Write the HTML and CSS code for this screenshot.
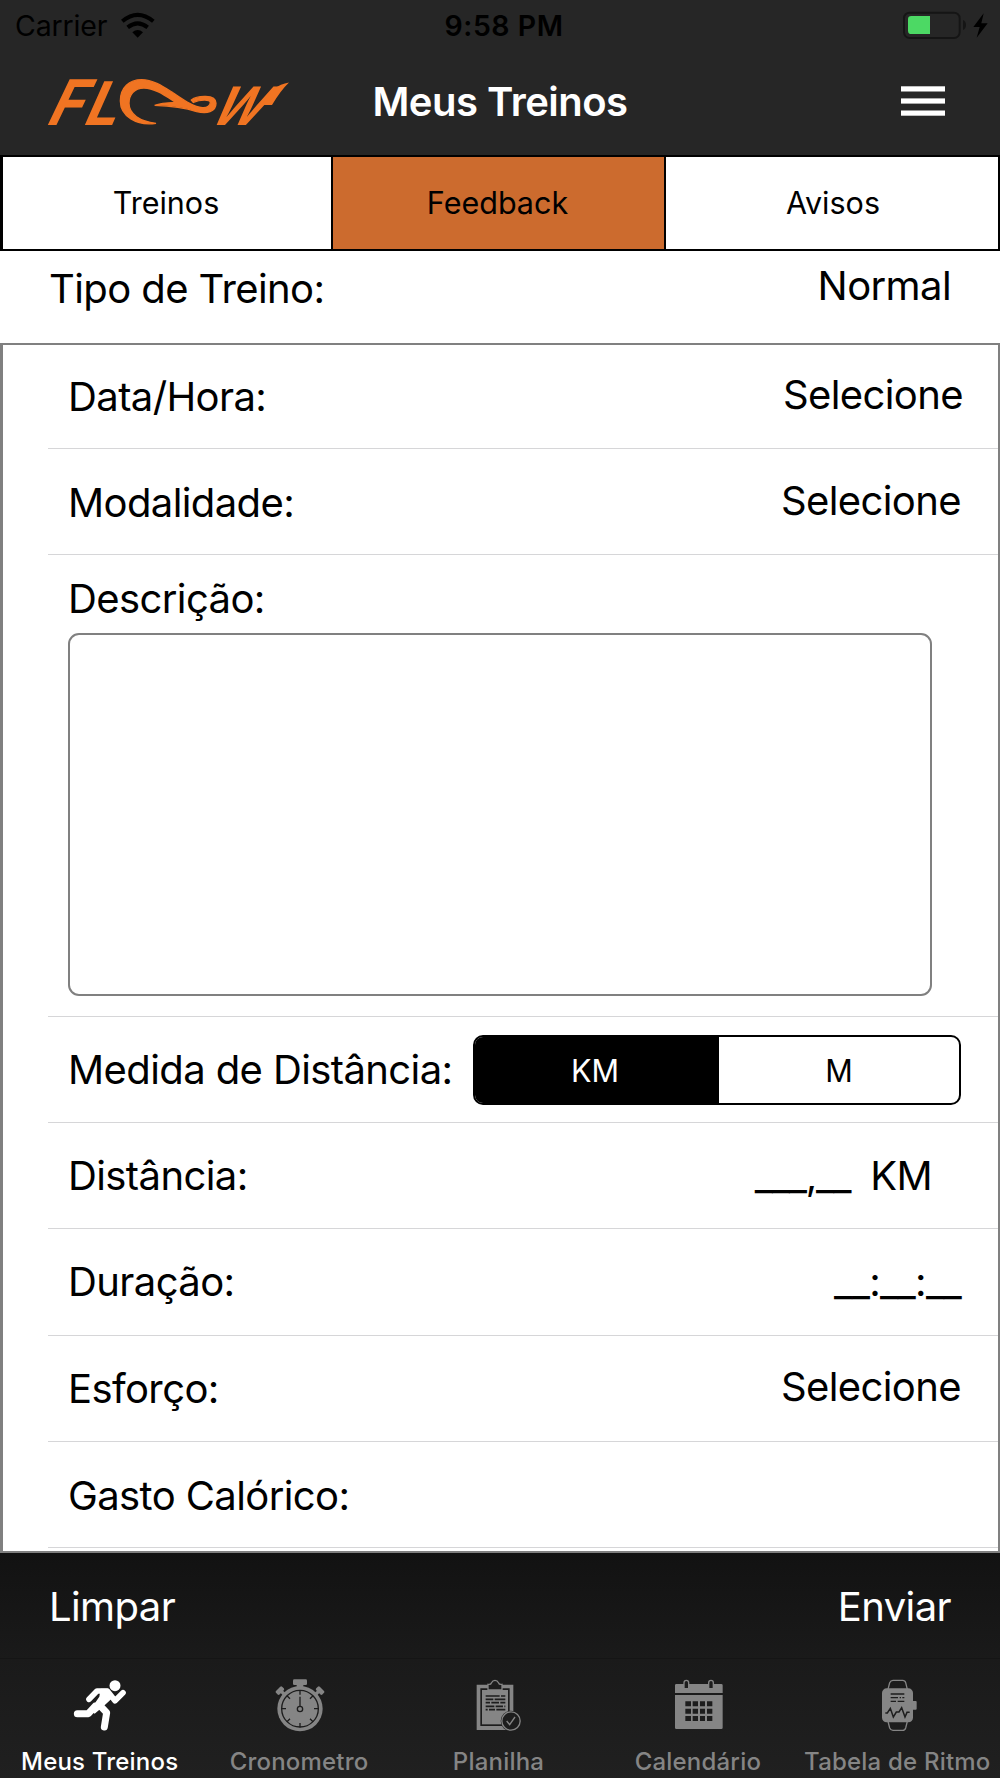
FILE: index.html
```html
<!DOCTYPE html>
<html lang="pt-BR">
<head>
<meta charset="utf-8">
<title>Meus Treinos</title>
<link rel="stylesheet" href="styles.css">
</head>
<body>
<div class="screen">
  <header class="header">
    <div class="status">
      <div class="status-side">
        <span class="carrier">Carrier</span>
        <svg class="wifi" width="36" height="26" viewBox="360 33 108 78">
          <g fill="none" stroke="#000" stroke-width="12">
            <path d="M367 61 Q413 22 460 61"/>
            <path d="M383 79 Q413 55 443 79"/>
          </g>
          <path d="M397 94 Q413 80 429 94 L413 110Z"/>
        </svg>
      </div>
      <span class="time">9:58 PM</span>
      <div class="status-side status-right">
        <svg width="86" height="28" viewBox="699 30 258 84">
          <rect x="702" y="35" width="167" height="76" rx="17" fill="none" stroke="#151515" stroke-width="6"/>
          <path d="M879 57 Q888 61 888 72 T879 87Z" fill="#151515"/>
          <path d="M780 45H724Q714 45 714 55V89Q714 99 724 99H780Z" fill="#4cd964"/>
          <path d="M941 37 910 78H929L920 110 953 67H934Z" fill="#000"/>
        </svg>
      </div>
    </div>
    <div class="nav">
      <svg class="logo" width="270" height="100" viewBox="25 50 270 100" fill="#f07422">
        <text class="logo-letter" font-size="63" transform="translate(44 123.500) skewX(-25.5) scale(.92 1)">F</text>
        <text class="logo-letter" font-size="60" transform="translate(81 123.500) skewX(-24) scale(.98 1)">L</text>
        <path stroke="#f07422" stroke-width="4" transform="scale(.33333)" d="M468 367C410 376 361 345 361 300C361 260 388 236 425 236C460 236 490 257 520 276C550 296 580 318 607 320C622 321 631 314 631 304C630 294 600 296 580 304L574 297C590 284 648 278 648 307C648 334 620 338 590 332C560 322 530 315 464 313Q482 306 527 304C500 287 465 261 432 261C402 261 387 282 387 307C387 340 420 361 468 367Z"/>
        <text class="logo-letter" font-size="53" transform="translate(206 123.500) skewX(-34) scale(.92 1)">W</text>
        <path d="M262 104Q272 84 289 81.500Q281 89 272 104Z"/>
      </svg>
      <h1 class="title">Meus Treinos</h1>
      <svg class="menu" width="44" height="31" viewBox="0 0 44 31" fill="#fff">
        <rect y="0.300" width="44" height="5.200"/><rect y="12.400" width="44" height="5.200"/><rect y="24.500" width="44" height="5.200"/>
      </svg>
    </div>
  </header>

  <div class="tabs">
    <div class="tab">Treinos</div>
    <div class="tab tab-on">Feedback</div>
    <div class="tab tab-last">Avisos</div>
  </div>

  <div class="type-row"><span>Tipo de Treino:</span><span class="type-value">Normal</span></div>

  <main class="form">
    <div class="row row-first"><span>Data/Hora:</span><span class="value">Selecione</span></div>
    <div class="row"><span>Modalidade:</span><span class="value">Selecione</span></div>
    <div class="row row-text"><span>Descrição:</span><div class="textbox"></div></div>
    <div class="row">
      <span>Medida de Distância:</span>
      <div class="segment"><span class="seg seg-on">KM</span><span class="seg">M</span></div>
    </div>
    <div class="row row-up"><span>Distância:</span><span class="distance"><span class="mask">___,__</span><span>KM</span></span></div>
    <div class="row row-up"><span>Duração:</span><span class="mask mask-time">__:__:__</span></div>
    <div class="row"><span>Esforço:</span><span class="value">Selecione</span></div>
    <div class="row"><span>Gasto Calórico:</span></div>
  </main>

  <footer class="footer">
    <div class="toolbar"><span>Limpar</span><span>Enviar</span></div>
    <nav class="tabbar">
      <div class="item item-on">
        <svg class="icon" viewBox="210 435 180 180">
          <circle cx="345" cy="467" r="16.500" fill="currentColor"/>
          <g fill="none" stroke="currentColor" stroke-linecap="round" stroke-linejoin="round">
            <path stroke-width="17" d="M267 508 291 483H322L345 512 369 488"/>
            <path stroke-width="21" d="M232 551H265L285 529"/>
            <path stroke-width="21" d="M300 527 320 548 313 591"/>
          </g>
          <path fill="currentColor" d="M302 476H324L338 503 309 530 284 551 270 541 298 500Z"/>
        </svg>
        <span>Meus Treinos</span>
      </div>
      <div class="item">
        <svg class="icon" viewBox="808 435 180 180">
          <g fill="currentColor">
            <rect x="880" y="448" width="42" height="17" rx="4"/><rect x="891" y="463" width="20" height="10"/>
            <rect x="-13" y="-8" width="26" height="15" rx="4" transform="translate(841 482) rotate(-45)"/>
            <rect x="-5" y="3" width="10" height="12" transform="translate(843 482) rotate(-45)"/>
            <rect x="-13" y="-8" width="26" height="15" rx="4" transform="translate(961 482) rotate(45)"/>
            <rect x="-5" y="3" width="10" height="12" transform="translate(959 482) rotate(45)"/>
            <circle cx="901" cy="536" r="68"/>
          </g>
          <g fill="none" stroke="#1d1d1d" stroke-width="4">
            <circle cx="901" cy="536" r="55"/><circle cx="901" cy="537" r="8"/>
            <path d="M901 528V500M901 481V494M901 579V592M845 536H859M943 536H957M862 497 871 506M940 497 931 506M862 575 871 566M940 575 931 566"/>
          </g>
        </svg>
        <span>Cronometro</span>
      </div>
      <div class="item">
        <svg class="icon" viewBox="205 435 180 180">
          <path fill="currentColor" d="M231 464H341V600H231Z"/>
          <path fill="#1d1d1d" d="M242 475H330V588H242Z"/>
          <path fill="currentColor" d="M247 480H325V583H247Z"/>
          <path fill="#1d1d1d" stroke="currentColor" stroke-width="4" d="M265 480V463Q274 464 275 459Q279 451 286 451T297 459Q298 464 307 463V480Z"/>
          <g stroke="#1d1d1d" stroke-width="5" fill="none">
            <path d="M258 498H300M304 498H317M258 508H281M285 508H317M258 518H271M275 518H298M302 518H317M258 529H284M288 529H310M314 529H317M258 539H264M268 539H286M290 539H317"/>
          </g>
          <circle cx="334" cy="573" r="31" fill="#1d1d1d"/>
          <circle cx="334" cy="573" r="27.500" fill="#1d1d1d" stroke="currentColor" stroke-width="4"/>
          <path d="M321 573 330 584 346 561" fill="none" stroke="currentColor" stroke-width="4"/>
        </svg>
        <span>Planilha</span>
      </div>
      <div class="item">
        <svg class="icon" viewBox="-96 435 180 180">
          <path fill="currentColor" d="M-71 462H64Q68 462 68 466V489H-75V466Q-75 462-71 462ZM-75 495H68V593Q68 597 64 597H-71Q-75 597-75 593Z"/>
          <g fill="#1d1d1d" stroke="currentColor" stroke-width="4">
            <path d="M-48 476V458Q-48 451-41 451T-34 458V476ZM26 476V458Q26 451 33 451T40 458V476Z"/>
          </g>
          <path fill="#1d1d1d" d="M-44 514h17v15h-17zM-22 514h16v15h-16zM0 514h15v15H0zM21 514h16v15H21zM-44 536h17v15h-17zM-22 536h16v15h-16zM0 536h15v15H0zM21 536h16v15H21zM-44 558h17v15h-17zM-22 558h16v15h-16zM0 558h15v15H0zM21 558h16v15H21z"/>
        </svg>
        <span>Calendário</span>
      </div>
      <div class="item">
        <svg class="icon" viewBox="501 435 180 180">
          <path fill="none" stroke="currentColor" stroke-width="4" d="M564 478 569 458Q572 451 579 451H608Q615 451 617 458L622 478M564 574 569 594Q572 601 579 601H608Q615 601 617 594L622 574"/>
          <rect x="546" y="475" width="93" height="102" rx="14" fill="currentColor"/>
          <rect x="634" y="513" width="16" height="26" rx="3" fill="currentColor"/>
          <g fill="none" stroke="#1d1d1d" stroke-width="4">
            <path d="M572 492H613M572 503H594M599 503H603M607 503H613M572 514H588M593 514H613"/>
            <path stroke-width="4.500" d="M556 549H562L571 535 580 561 589 546H597L605 533 615 561 621 547H629"/>
          </g>
        </svg>
        <span>Tabela de Ritmo</span>
      </div>
    </nav>
  </footer>
</div>
</body>
</html>
```
FILE: styles.css
```css
* { box-sizing: border-box; }
body {
  margin: 0;
  background: #fff;
  color: #000;
  font-family: Inter, "Liberation Sans", sans-serif;
  font-size: 40px;
  line-height: 48px;
  letter-spacing: -0.600px;
}
.screen { width: 1000px; height: 1778px; display: flex; flex-direction: column; overflow: hidden; }

.header { height: 155px; background: #262626; }
.status {
  height: 50px;
  padding: 1px 11px 0 15px;
  display: flex;
  align-items: center;
  justify-content: space-between;
  font-size: 28.5px;
  letter-spacing: -0.150px;
}
.status-side { width: 300px; display: flex; align-items: center; gap: 13px; }
.status-right { justify-content: flex-end; margin-top: -1px; }
.wifi { margin-bottom: 2px; }
.time { font-weight: 600; letter-spacing: 0.500px; padding-left: 4px; }
.nav {
  height: 105px;
  padding: 0 55px 3px 25px;
  display: grid;
  grid-template-columns: 270px 1fr 240px;
  align-items: center;
}
.title { margin: 2px 0 0; font-size: 40px; font-weight: 600; text-align: center; color: #fff; letter-spacing: -0.500px; }
.menu { justify-self: end; }
.logo { overflow: visible; }
.logo-letter { font-family: Inter, sans-serif; font-weight: 700; letter-spacing: 0; }

.tabs {
  height: 96px;
  display: grid;
  grid-template-columns: 328px 331px 1fr;
  gap: 2px;
  padding: 2px 2px 2px 3px;
  background: #000;
  font-size: 30.5px;
  letter-spacing: 0;
}
.tab { display: flex; align-items: center; justify-content: center; padding-right: 2px; background: #fff; }
.tab-on { background: #cc6b2e; }
.tab-last { padding: 0 0 0 2px; }

.type-row {
  height: 92px;
  padding: 14px 49px 0 49px;
  display: flex;
  justify-content: space-between;
}
.type-value { margin-top: -3px; }

.form {
  height: 1210px;
  padding-left: 45px;
  border: solid #808080;
  border-width: 2px 2px 2px 3px;
}
.row {
  height: 106.300px;
  padding: 2px 37px 0 20px;
  display: flex;
  align-items: center;
  justify-content: space-between;
  border-bottom: 1.500px solid #d6d6d8;
}
.row-first { height: 104px; padding-top: 1px; padding-right: 35px; }
.row-up { padding-top: 0; }
.value { margin-top: -4px; }
.row-text {
  height: 461.500px;
  flex-direction: column;
  align-items: flex-start;
  justify-content: flex-start;
  padding-top: 20px;
}
.textbox {
  width: 864px;
  height: 363px;
  margin-top: 10px;
  border: 2.500px solid #808080;
  border-radius: 11px;
}
.segment {
  width: 488px;
  height: 70px;
  display: flex;
  border: 2px solid #000;
  border-radius: 10px;
  overflow: hidden;
  font-size: 30.5px;
  letter-spacing: 0;
}
.seg { flex: 1; display: flex; align-items: center; justify-content: center; padding-top: 1px; }
.seg-on { background: #000; color: #fff; padding-right: 4px; }
.distance { display: flex; gap: 20px; padding-right: 29px; }
.mask { letter-spacing: -1.200px; }
.mask-time { letter-spacing: -0.700px; }

.footer {
  flex: 1;
  color: #fff;
  background: linear-gradient(#121212, #1a1a1a 47%, #202020);
}
.toolbar {
  height: 106px;
  padding: 2px 49px 0 49px;
  display: flex;
  align-items: center;
  justify-content: space-between;
  border-bottom: 1px solid #151515;
}
.tabbar { display: grid; grid-template-columns: repeat(5, 1fr); padding: 16px 3px 0 0; }
.item {
  display: flex;
  flex-direction: column;
  align-items: center;
  gap: 12px;
  color: #858585;
  font-size: 24px;
  font-weight: 500;
  letter-spacing: 0.200px;
  line-height: 30px;
  white-space: nowrap;
}
.item-on { color: #fff; }
.icon { width: 60px; height: 60px; }
```
